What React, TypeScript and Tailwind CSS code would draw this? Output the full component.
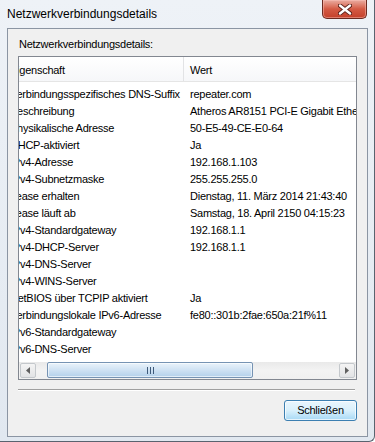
import React from 'react';

const rows: [string, string][] = [
  ['Verbindungsspezifisches DNS-Suffix', 'repeater.com'],
  ['Beschreibung', 'Atheros AR8151 PCI-E Gigabit Ethernet Controller (NDIS 6.20)'],
  ['Physikalische Adresse', '50-E5-49-CE-E0-64'],
  ['DHCP-aktiviert', 'Ja'],
  ['IPv4-Adresse', '192.168.1.103'],
  ['IPv4-Subnetzmaske', '255.255.255.0'],
  ['Lease erhalten', 'Dienstag, 11. März 2014 21:43:40'],
  ['Lease läuft ab', 'Samstag, 18. April 2150 04:15:23'],
  ['IPv4-Standardgateway', '192.168.1.1'],
  ['IPv4-DHCP-Server', '192.168.1.1'],
  ['IPv4-DNS-Server', ''],
  ['IPv4-WINS-Server', ''],
  ['NetBIOS über TCPIP aktiviert', 'Ja'],
  ['Verbindungslokale IPv6-Adresse', 'fe80::301b:2fae:650a:21f%11'],
  ['IPv6-Standardgateway', ''],
  ['IPv6-DNS-Server', ''],
];

const CloseButton = () => (
  <div className="absolute top-0 left-[322px] w-[45px] h-[19px] rounded-b-[5px] border border-t-0 border-[#6b2a20] bg-gradient-to-b from-[#e9aca1] via-[#d45a44] to-[#c4402a] shadow-[inset_0_0_0_1px_rgba(255,200,190,0.45)] flex items-center justify-center">
    <svg width="14" height="11" viewBox="0 0 14 11">
      <path d="M2 1.5 L12 9.5 M12 1.5 L2 9.5" stroke="#5a2018" strokeWidth="4.2" strokeLinecap="round" />
      <path d="M2 1.5 L12 9.5 M12 1.5 L2 9.5" stroke="#ffffff" strokeWidth="2.4" strokeLinecap="round" />
    </svg>
  </div>
);

const ArrowButton = ({ dir }: { dir: 'left' | 'right' }) => (
  <div className="w-[16px] h-[15px] my-[1px] rounded-[2px] border border-[#c4c8cc] bg-gradient-to-b from-[#f4f4f4] to-[#e2e3e5] flex items-center justify-center">
    <svg width="4" height="7" viewBox="0 0 4 7">
      {dir === 'left' ? <path d="M4 0 L0 3.5 L4 7 Z" fill="#606060" /> : <path d="M0 0 L4 3.5 L0 7 Z" fill="#606060" />}
    </svg>
  </div>
);

const ScrollBar = () => (
  <div className="h-[17px] flex items-start bg-gradient-to-b from-[#e9e9e9] via-[#f3f3f3] to-[#f0f0f0] px-[1px]">
    <ArrowButton dir="left" />
    <div className="flex-1 flex pl-[11px]">
      <div className="w-[206px] h-[16px] rounded-[2px] border border-[#7693b3] bg-gradient-to-b from-[#eaf3fb] via-[#cfe2f3] to-[#b3d0ea] shadow-[inset_0_0_0_1px_rgba(255,255,255,0.6)] flex items-center justify-center">
        <svg width="7" height="7" viewBox="0 0 7 7">
          <path d="M0.5 0 V7 M3.5 0 V7 M6.5 0 V7" stroke="#3e5a7a" strokeWidth="1" />
        </svg>
      </div>
    </div>
    <ArrowButton dir="right" />
  </div>
);

export default function App() {
  return (
    <div className="relative w-[375px] h-[442px] overflow-hidden bg-gradient-to-b from-[#eef2f7] to-[#e1e8f0] border-r border-b border-[#59636f] rounded-br-[6px] font-['Liberation_Sans',Arial,sans-serif] text-black">
      <div className="h-[28px] pl-[7px] pt-[7px] text-[12px] leading-[14px]">Netzwerkverbindungsdetails</div>
      <CloseButton />

      <div className="ml-[7px] w-[361px] h-[409px] border border-[#8b95a3] bg-[#f0f0f0] flex flex-col px-[10px] text-[11px] leading-[13px] tracking-[-0.25px]">
        <div className="mt-[9px] pl-[1px]">Netzwerkverbindungsdetails:</div>

        <div className="mt-[5px] h-[324px] border border-[#828790] bg-white flex flex-col overflow-hidden">
          <div className="flex-1 overflow-hidden">
            <div className="ml-[-15px]">
              <div className="flex h-[25px] border-b border-[#e5e5e5] bg-gradient-to-b from-white to-[#f6f7f9]">
                <div className="w-[180px] shrink-0 pl-[6px] pt-[7px] border-r border-[#e2e3e5] whitespace-nowrap overflow-hidden">Eigenschaft</div>
                <div className="pl-[6px] pt-[7px] whitespace-nowrap">Wert</div>
              </div>
              <div className="pt-[4px]">
                {rows.map(([k, v]) => (
                  <div key={k} className="flex h-[17px] items-center">
                    <div className="w-[180px] shrink-0 pl-[6px] whitespace-nowrap overflow-hidden">{k}</div>
                    <div className="pl-[6px] whitespace-nowrap">{v}</div>
                  </div>
                ))}
              </div>
            </div>
          </div>
          <ScrollBar />
        </div>

        <div className="mt-[9px] mr-[2px] h-[2px] border-t border-[#a0a0a0] border-b border-b-white" />

        <div className="mt-[9px] flex justify-end">
          <button className="w-[73px] h-[21px] rounded-[3px] border border-[#3c7fb1] bg-gradient-to-b from-[#eaf6fd] via-[#d9f0fc] to-[#a7d9f5] shadow-[inset_0_0_0_1px_rgba(255,255,255,0.7)] text-[11px] leading-[13px] tracking-[-0.25px] text-black">
            Schließen
          </button>
        </div>
      </div>
    </div>
  );
}
